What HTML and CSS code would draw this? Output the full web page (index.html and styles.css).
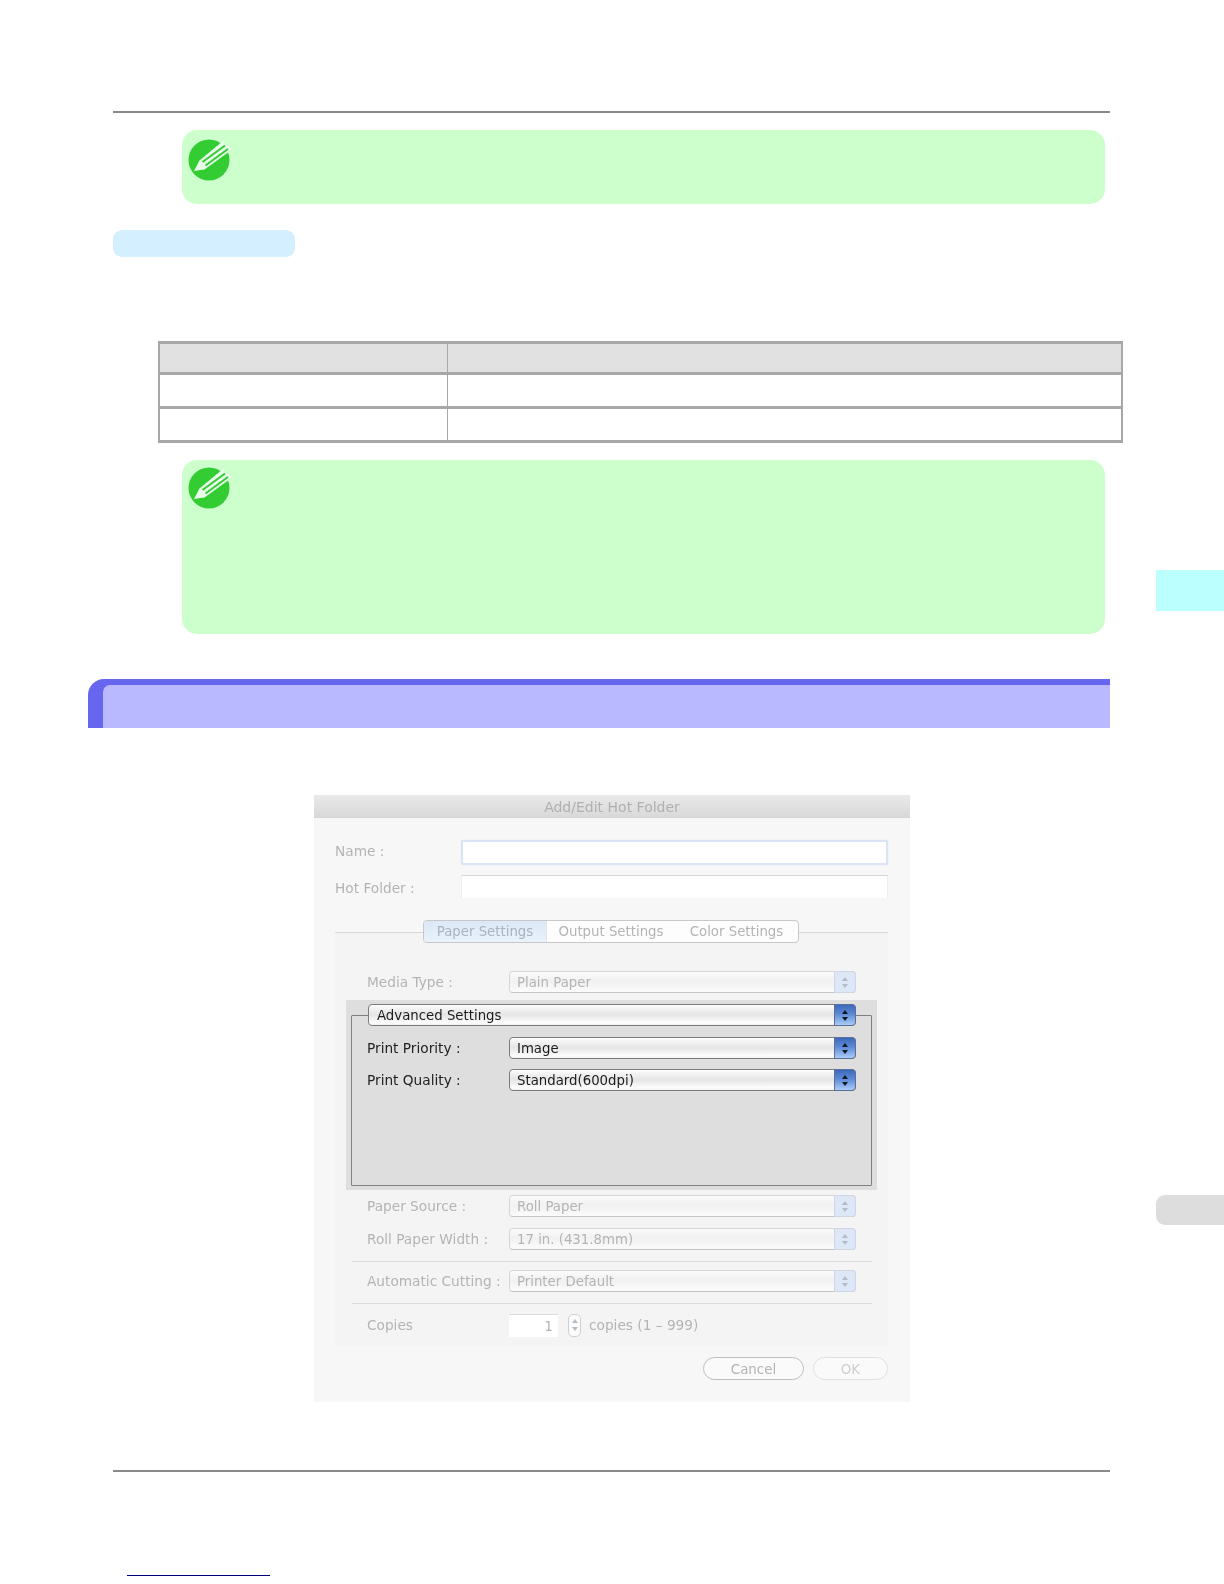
FILE: index.html
```html
<!DOCTYPE html>
<html lang="en">
<head>
<meta charset="utf-8">
<title>Add/Edit Hot Folder</title>
<link rel="stylesheet" href="styles.css">
</head>
<body>
<div class="page">
  <div class="rule rule-top"></div>

  <div class="note note-short">
    <svg class="note-icon" viewBox="0 0 44 44" aria-hidden="true">
      <circle cx="22" cy="22" r="20.5" fill="#33cc33"/>
      <path d="M36 3 L44.5 12 L17.5 31.5 L7 33 L12.5 22.5 Z" fill="#e8fbe8"/>
      <path d="M15.5 24 L38 7.5 M18.5 27.5 L41 11" stroke="#33cc33" stroke-width="2" fill="none"/>
    </svg>
  </div>

  <div class="pill"></div>

  <table class="grid">
    <tr class="grid-head"><th class="col-a"></th><th></th></tr>
    <tr><td></td><td></td></tr>
    <tr><td></td><td></td></tr>
  </table>

  <div class="note note-tall">
    <svg class="note-icon" viewBox="0 0 44 44" aria-hidden="true">
      <circle cx="22" cy="22" r="20.5" fill="#33cc33"/>
      <path d="M36 3 L44.5 12 L17.5 31.5 L7 33 L12.5 22.5 Z" fill="#e8fbe8"/>
      <path d="M15.5 24 L38 7.5 M18.5 27.5 L41 11" stroke="#33cc33" stroke-width="2" fill="none"/>
    </svg>
  </div>

  <div class="section-bar"><div class="section-fill"></div></div>

  <div class="dialog">
    <div class="titlebar">Add/Edit Hot Folder</div>

    <div class="field field-name">
      <span class="field-label">Name :</span>
      <div class="textbox textbox-focus"></div>
    </div>
    <div class="field field-folder">
      <span class="field-label">Hot Folder :</span>
      <div class="textbox"></div>
    </div>

    <div class="panel">
      <div class="tabs">
        <span class="tab tab-on">Paper Settings</span>
        <span class="tab tab-mid">Output Settings</span>
        <span class="tab tab-end">Color Settings</span>
      </div>

      <div class="row row-media">
        <span class="row-label">Media Type :</span>
        <div class="select">
          <span class="select-text">Plain Paper</span>
          <span class="select-arrows"><i class="up"></i><i class="down"></i></span>
        </div>
      </div>

      <div class="group">
        <div class="group-box">
          <div class="select select-live select-legend">
            <span class="select-text">Advanced Settings</span>
            <span class="select-arrows"><i class="up"></i><i class="down"></i></span>
          </div>
          <div class="row row-live row-priority">
            <span class="row-label">Print Priority :</span>
            <div class="select select-live">
              <span class="select-text">Image</span>
              <span class="select-arrows"><i class="up"></i><i class="down"></i></span>
            </div>
          </div>
          <div class="row row-live row-quality">
            <span class="row-label">Print Quality :</span>
            <div class="select select-live">
              <span class="select-text">Standard(600dpi)</span>
              <span class="select-arrows"><i class="up"></i><i class="down"></i></span>
            </div>
          </div>
        </div>
      </div>

      <div class="row row-source">
        <span class="row-label">Paper Source :</span>
        <div class="select">
          <span class="select-text">Roll Paper</span>
          <span class="select-arrows"><i class="up"></i><i class="down"></i></span>
        </div>
      </div>
      <div class="row row-width">
        <span class="row-label">Roll Paper Width :</span>
        <div class="select">
          <span class="select-text">17 in. (431.8mm)</span>
          <span class="select-arrows"><i class="up"></i><i class="down"></i></span>
        </div>
      </div>
      <div class="divider divider-a"></div>
      <div class="row row-cut">
        <span class="row-label">Automatic Cutting :</span>
        <div class="select">
          <span class="select-text">Printer Default</span>
          <span class="select-arrows"><i class="up"></i><i class="down"></i></span>
        </div>
      </div>
      <div class="divider divider-b"></div>
      <div class="row row-copies">
        <span class="row-label">Copies</span>
        <div class="copies-box">1</div>
        <div class="stepper"><i class="up"></i><i class="down"></i></div>
        <span class="copies-text">copies (1 – 999)</span>
      </div>
    </div>

    <div class="actions">
      <span class="btn btn-cancel">Cancel</span>
      <span class="btn btn-ok">OK</span>
    </div>
  </div>

  <div class="rule rule-bottom"></div>
  <div class="foot-link"></div>

  <div class="side-tab side-cyan"></div>
  <div class="side-tab side-gray"></div>
</div>
</body>
</html>
```

FILE: styles.css
```css
* { box-sizing: border-box; }
html, body { margin: 0; padding: 0; background: #fff; }

.page {
  position: relative;
  width: 1224px;
  height: 1584px;
  padding-top: 111px;
  overflow: hidden;
  font-family: "DejaVu Sans", sans-serif;
}

.rule { width: 997px; height: 2px; margin-left: 113px; background: #8a8a8a; }

.note {
  width: 923px;
  margin: 0 0 0 182px;
  padding: 8px 0 0 5px;
  background: #ccffcc;
  border-radius: 15px;
}
.note-short { height: 74px; margin-top: 17px; }
.note-tall { height: 174px; margin-top: 17px; padding-top: 6px; }
.note-icon { display: block; width: 44px; height: 44px; overflow: visible; }

.pill {
  width: 182px;
  height: 27px;
  margin: 26px 0 0 113px;
  background: #d4efff;
  border-radius: 9px;
}

.grid {
  width: 965px;
  margin: 84px 0 0 158px;
  border-collapse: separate;
  border-spacing: 0;
  table-layout: fixed;
  border-top: 3px solid #a8a8a8;
  border-left: 2px solid #a8a8a8;
  border-right: 2px solid #a8a8a8;
}
.grid th, .grid td {
  height: 34px;
  padding: 0;
  border-bottom: 3px solid #a8a8a8;
}
.grid-head th { height: 31px; background: #e1e1e1; }
.col-a { width: 288px; }
.grid th:first-child, .grid td:first-child { border-right: 1px solid #a8a8a8; }

.section-bar {
  width: 1022px;
  height: 49px;
  margin: 45px 0 0 88px;
  padding: 6px 0 0 15px;
  background: #6666ee;
  border-radius: 16px 0 0 0;
}
.section-fill {
  height: 43px;
  background: #b9b9ff;
  border-radius: 7px 0 0 0;
}

.dialog {
  width: 596px;
  height: 607px;
  margin: 67px 0 0 314px;
  background: #f7f7f7;
  filter: blur(0.35px);
  font-size: 13.7px;
  color: #b4b4b4;
}
.titlebar {
  height: 23px;
  background: linear-gradient(#e9e9e9, #d9d9d9);
  border-bottom: 1px solid #d4d4d4;
  text-align: center;
  line-height: 25px;
  font-size: 14px;
  color: #b0b0b0;
}

.field { display: flex; align-items: center; margin-left: 21px; height: 23px; }
.field-name { margin-top: 23px; }
.field-name .field-label { margin-top: -4px; }
.field-folder { margin-top: 11px; }
.field-folder .field-label { margin-top: 2px; }
.field-label { width: 126px; }
.textbox {
  width: 427px;
  height: 23px;
  background: #fff;
  border-top: 1px solid #d6d6d6;
  border-left: 1px solid #eee;
  border-right: 1px solid #eee;
}
.textbox-focus {
  height: 25px;
  border: 2px solid #dbe4f4;
  border-radius: 2px;
  box-shadow: 0 0 1px #c6d4ee;
}

.panel {
  width: 553px;
  height: 426px;
  margin: 22px 0 0 21px;
  background-color: #f4f4f4;
  background-image: linear-gradient(#f7f7f7 12px, #d8d8d8 12px, #d8d8d8 13px, #f4f4f4 13px);
}

.tabs {
  display: flex;
  width: 376px;
  height: 23px;
  margin-left: 88px;
  font-size: 13.3px;
  background: #fdfdfd;
  border: 1px solid #c8c8c8;
  border-radius: 4px;
}
.tab { height: 21px; line-height: 22px; text-align: center; }
.tab-on {
  width: 122px;
  background: linear-gradient(#dbe8f8, #eaf2fb);
  border-radius: 3px 0 0 3px;
  color: #a9b2bd;
}
.tab-mid { width: 129px; border-left: 1px solid #e4e4e4; }
.tab-end { width: 123px; }

.row { display: flex; align-items: center; height: 22px; margin-left: 32px; }
.row-label { width: 142px; flex: none; white-space: nowrap; }
.row-media { margin-top: 28px; }
.row-source { margin-top: 5px; }
.row-width { margin-top: 11px; }
.row-cut { margin-top: 8px; }
.row-copies { margin-top: 9px; height: 24px; }

.select {
  position: relative;
  display: flex;
  align-items: center;
  width: 347px;
  height: 22px;
  padding-left: 7px;
  font-size: 13.3px;
  background: linear-gradient(#fbfbfb, #f1f1f1 45%, #fbfbfb);
  border: 1px solid #d6d6d6;
  border-bottom-color: #c4c4c4;
  border-radius: 4px;
  color: #b4b4b4;
}
.select-text { flex: 1; white-space: nowrap; }
.select-arrows {
  display: flex;
  flex-direction: column;
  align-items: center;
  justify-content: center;
  gap: 3px;
  align-self: stretch;
  width: 22px;
  margin: -1px -1px -1px 0;
  background: linear-gradient(#dfe7f5, #dce8f8);
  border: 1px solid #cfd6e6;
  border-radius: 0 4px 4px 0;
}
.up, .down { display: block; width: 0; height: 0; border-left: 3.5px solid transparent; border-right: 3.5px solid transparent; }
.up { border-bottom: 4px solid #b5bcc8; }
.down { border-top: 4px solid #b5bcc8; }

.select-live {
  background: linear-gradient(#fcfcfc 0, #e8e8e8 40%, #e6e6e6 50%, #fdfdfd 90%, #efefef);
  border-color: #7c7c7c;
  color: #1c1c1c;
}
.select-live .select-arrows {
  background: linear-gradient(#3c69bd, #5d8ad5 45%, #a9cdf6);
  border-color: #5c6f98;
}
.select-live .up { border-bottom-color: #101828; }
.select-live .down { border-top-color: #101828; }

.group {
  width: 531px;
  height: 190px;
  margin: 7px 0 0 11px;
  padding: 15px 5px 4px;
  background: #dedede;
}
.group-box {
  height: 171px;
  border: 1px solid #808080;
  border-radius: 1px;
}
.select-legend { width: 488px; margin: -12px 0 0 16px; padding-left: 8px; }
.row-live { margin-left: 15px; color: #222; }
.row-priority { margin-top: 11px; }
.row-quality { margin-top: 10px; }

.divider { width: 520px; height: 1px; margin-left: 17px; background: #dcdcdc; }
.divider-a { margin-top: 11px; }
.divider-b { margin-top: 11px; }

.copies-box {
  width: 49px;
  height: 23px;
  padding-right: 5px;
  background: #fff;
  border-top: 1px solid #dcdcdc;
  text-align: right;
  line-height: 22px;
}
.stepper {
  display: flex;
  flex-direction: column;
  align-items: center;
  justify-content: center;
  gap: 4px;
  width: 13px;
  height: 23px;
  margin-left: 10px;
  background: #fbfbfb;
  border: 1px solid #cfcfcf;
  border-radius: 5px;
}
.copies-text { margin-left: 8px; white-space: nowrap; }

.actions { display: flex; justify-content: flex-end; gap: 9px; margin: 11px 22px 0 0; font-size: 13.4px; }
.btn {
  height: 23px;
  line-height: 23px;
  text-align: center;
  background: #fafafa;
  border-radius: 12px;
}
.btn-cancel { width: 101px; border: 1px solid #bdbdbd; }
.btn-ok { width: 75px; border: 1px solid #e0e0e0; color: #cfcfcf; }

.rule-bottom { margin-top: 68px; }

.foot-link { width: 143px; height: 1px; margin: 103px 0 0 127px; background: #00007f; }

.side-tab { position: absolute; left: 1156px; width: 68px; }
.side-cyan { top: 570px; height: 41px; background: #bbffff; }
.side-gray { top: 1195px; height: 30px; background: #dddddd; border-radius: 9px 0 0 9px; }
```
